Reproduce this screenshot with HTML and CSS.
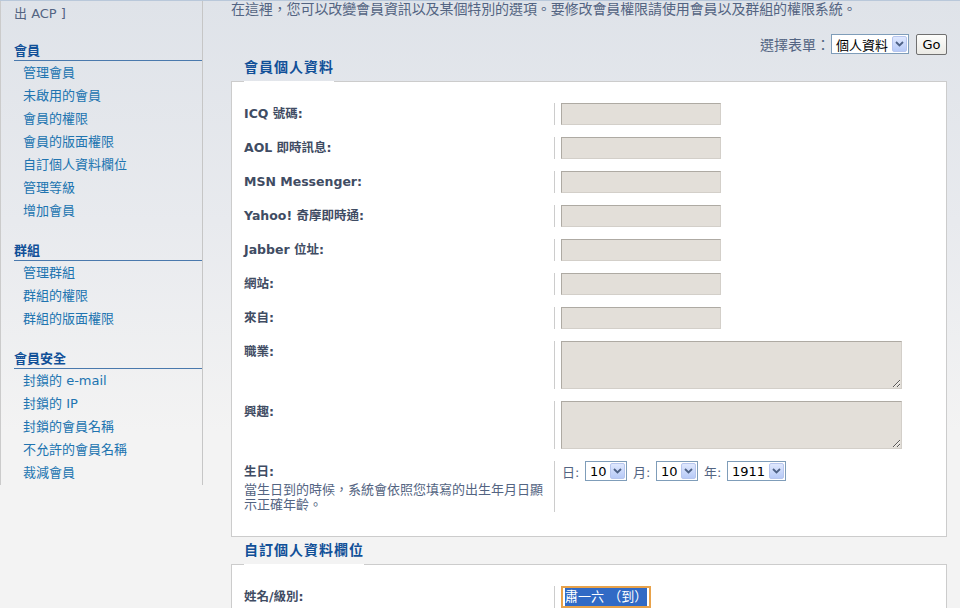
FILE: index.html
```html
<!DOCTYPE html>
<html lang="zh-Hant">
<head>
<meta charset="utf-8">
<title>ACP - 會員個人資料</title>
<link rel="stylesheet" href="styles.css">
</head>
<body>
<div class="page">
  <aside class="menu">
    <div class="toplink">出 ACP ]</div>
    <div class="group">
      <div class="mhead">會員</div>
      <ul class="mlist">
        <li><a href="#">管理會員</a></li>
        <li><a href="#">未啟用的會員</a></li>
        <li><a href="#">會員的權限</a></li>
        <li><a href="#">會員的版面權限</a></li>
        <li><a href="#">自訂個人資料欄位</a></li>
        <li><a href="#">管理等級</a></li>
        <li><a href="#">增加會員</a></li>
      </ul>
    </div>
    <div class="group">
      <div class="mhead">群組</div>
      <ul class="mlist">
        <li><a href="#">管理群組</a></li>
        <li><a href="#">群組的權限</a></li>
        <li><a href="#">群組的版面權限</a></li>
      </ul>
    </div>
    <div class="group">
      <div class="mhead">會員安全</div>
      <ul class="mlist">
        <li><a href="#">封鎖的 e-mail</a></li>
        <li><a href="#">封鎖的 IP</a></li>
        <li><a href="#">封鎖的會員名稱</a></li>
        <li><a href="#">不允許的會員名稱</a></li>
        <li><a href="#">裁減會員</a></li>
      </ul>
    </div>
  </aside>

  <main class="main">
    <p class="intro">在這裡，您可以改變會員資訊以及某個特別的選項。要修改會員權限請使用會員以及群組的權限系統。</p>

    <div class="selrow">
      <span class="sellbl">選擇表單：</span>
      <span class="fsel s-top"><span class="fv">個人資料</span><span class="fbtn"><svg width="9" height="6" viewBox="0 0 9 6"><polyline points="1,1 4.5,4.5 8,1" fill="none" stroke="#4d6185" stroke-width="1.8"/></svg></span></span>
      <button class="go" type="button">Go</button>
    </div>

    <h3 class="legend">會員個人資料</h3>
    <div class="panel">
      <div class="row"><div class="dt"><label>ICQ 號碼:</label></div><div class="dd"><input class="txt" type="text"></div></div>
      <div class="row"><div class="dt"><label>AOL 即時訊息:</label></div><div class="dd"><input class="txt" type="text"></div></div>
      <div class="row"><div class="dt"><label>MSN Messenger:</label></div><div class="dd"><input class="txt" type="text"></div></div>
      <div class="row"><div class="dt"><label>Yahoo! 奇摩即時通:</label></div><div class="dd"><input class="txt" type="text"></div></div>
      <div class="row"><div class="dt"><label>Jabber 位址:</label></div><div class="dd"><input class="txt" type="text"></div></div>
      <div class="row"><div class="dt"><label>網站:</label></div><div class="dd"><input class="txt" type="text"></div></div>
      <div class="row"><div class="dt"><label>來自:</label></div><div class="dd"><input class="txt" type="text"></div></div>
      <div class="row"><div class="dt"><label>職業:</label></div><div class="dd"><textarea class="area"></textarea></div></div>
      <div class="row"><div class="dt"><label>興趣:</label></div><div class="dd"><textarea class="area"></textarea></div></div>
      <div class="row">
        <div class="dt"><label>生日:</label><div class="desc">當生日到的時候，系統會依照您填寫的出生年月日顯示正確年齡。</div></div>
        <div class="dd">
          <div class="bday">
            <span class="bl first">日:</span>
            <span class="fsel s-d"><span class="fv">10</span><span class="fbtn"><svg width="9" height="6" viewBox="0 0 9 6"><polyline points="1,1 4.5,4.5 8,1" fill="none" stroke="#4d6185" stroke-width="1.8"/></svg></span></span>
            <span class="bl">月:</span>
            <span class="fsel s-d"><span class="fv">10</span><span class="fbtn"><svg width="9" height="6" viewBox="0 0 9 6"><polyline points="1,1 4.5,4.5 8,1" fill="none" stroke="#4d6185" stroke-width="1.8"/></svg></span></span>
            <span class="bl">年:</span>
            <span class="fsel s-y"><span class="fv">1911</span><span class="fbtn"><svg width="9" height="6" viewBox="0 0 9 6"><polyline points="1,1 4.5,4.5 8,1" fill="none" stroke="#4d6185" stroke-width="1.8"/></svg></span></span>
          </div>
        </div>
      </div>
    </div>

    <h3 class="legend">自訂個人資料欄位</h3>
    <div class="panel">
      <div class="row">
        <div class="dt"><label>姓名/級別:</label><div class="desc">於本站使用的姓名及級別</div></div>
        <div class="dd"><div class="hsel"><span>肅一六 （到）</span></div></div>
      </div>
    </div>
  </main>
</div>
</body>
</html>
```

FILE: styles.css
```css
html, body {
  margin: 0;
  padding: 0;
  background: #f3f3f3;
}

body {
  border-top: 1px solid #b9c8da;
  font-family: "DejaVu Sans", "Noto Sans CJK TC", sans-serif;
}

.page {
  display: flex;
  align-items: flex-start;
  height: 607px;
  overflow: hidden;
  background: linear-gradient(to bottom, #dfe3e9 0px, #e8eaee 220px, #f3f3f3 430px);
}

/* ---------- side menu ---------- */
.menu {
  flex: none;
  width: 188px;
  height: 480px;
  padding: 4px 0 0 13px;
  border-left: 1px solid #cbcbcb;
  border-right: 1px solid #c6c6c6;
}

.toplink {
  font-size: 13px;
  line-height: 17px;
  color: #536482;
}

.group {
  margin-top: 20px;
}

.mhead {
  font-size: 13px;
  font-weight: bold;
  line-height: 18px;
  color: #115098;
  border-bottom: 1px solid #4a79ad;
}

.mlist {
  list-style: none;
  margin: 0;
  padding: 0 0 0 9px;
}

.mlist li {
  font-size: 13px;
  line-height: 23px;
  white-space: nowrap;
}

.mlist a {
  color: #2074b0;
  text-decoration: none;
}

/* ---------- main ---------- */
.main {
  flex: none;
  width: 716px;
  margin-left: 28px;
}

.intro {
  margin: 0;
  font-size: 14px;
  line-height: 17px;
  letter-spacing: -0.1px;
  color: #536482;
  white-space: nowrap;
}

.selrow {
  margin-top: 16px;
  height: 20px;
  display: flex;
  justify-content: flex-end;
  align-items: center;
}

.sellbl {
  font-size: 14px;
  color: #536482;
  margin-right: 1px;
}

.go {
  margin-left: 7px;
  width: 31px;
  height: 21px;
  padding: 0;
  font-family: "DejaVu Sans", sans-serif;
  font-size: 13px;
  color: #000;
  border: 1px solid #707070;
  border-radius: 2px;
  background: linear-gradient(to bottom, #fdfdfb, #ebeae5);
}

/* faux select */
.fsel {
  display: inline-flex;
  align-items: center;
  justify-content: space-between;
  box-sizing: border-box;
  height: 20px;
  padding: 0 1px 0 4px;
  border: 1px solid #7f9db9;
  background: #fff;
  font-size: 13px;
  color: #000;
  white-space: nowrap;
}

.s-top { width: 78px; }
.s-d { width: 42px; }
.s-y { width: 59px; }

.fbtn {
  flex: none;
  width: 15px;
  height: 16px;
  box-sizing: border-box;
  display: flex;
  align-items: center;
  justify-content: center;
  border: 1px solid #b7c6ee;
  border-radius: 2px;
  background: linear-gradient(to bottom, #dfe8fe, #b7caf7);
}

/* fieldset legend */
.legend {
  position: relative;
  width: fit-content;
  margin: 1px 0 -1px 13px;
  padding: 2px 0 4px;
  font-size: 14px;
  line-height: 20px;
  letter-spacing: 1px;
  font-weight: bold;
  color: #115098;
  border-bottom: 1px solid #fff;
}

.panel {
  background: #fff;
  border: 1px solid #cccccc;
  padding: 21px 12px 24px 12px;
}

.row {
  display: grid;
  grid-template-columns: 310px 1fr;
  margin-bottom: 12px;
}

.row:last-child {
  margin-bottom: 0;
}

.dt {
  padding-right: 9px;
}

.dt label {
  display: block;
  padding-top: 1px;
  font-size: 12.5px;
  line-height: 20px;
  font-weight: bold;
  color: #3f4c63;
  white-space: nowrap;
}

.desc {
  font-size: 13px;
  line-height: 15px;
  color: #536482;
}

.dd {
  border-left: 1px solid #cccccc;
  padding-left: 6px;
}

.txt {
  display: block;
  box-sizing: border-box;
  width: 160px;
  height: 22px;
  margin: 0;
  padding: 0 3px;
  background: #e3dfd9;
  border: 1px solid;
  border-color: #aeaaa3 #d3cfc9 #d3cfc9 #aeaaa3;
  font-size: 13px;
}

.area {
  display: block;
  box-sizing: border-box;
  width: 341px;
  height: 48px;
  margin: 0;
  padding: 2px 3px;
  background: #e3dfd9;
  border: 1px solid;
  border-color: #aeaaa3 #d3cfc9 #d3cfc9 #aeaaa3;
  font-size: 13px;
}

.bday {
  display: flex;
  align-items: center;
  height: 20px;
  font-size: 13px;
  color: #536482;
}

.bl {
  width: 23px;
  margin-left: 6px;
  white-space: nowrap;
}

.bl.first {
  margin-left: 1px;
  width: 23px;
}

.bl:last-of-type {
  width: 24px;
}

.hsel {
  display: flex;
  box-sizing: border-box;
  width: 90px;
  height: 22px;
  padding: 0 2px;
  border: 2px solid #e8a24a;
  background: #fff;
}

.hsel span {
  flex: 1;
  background: #316ac5;
  color: #fff;
  font-size: 13px;
  line-height: 18px;
  white-space: nowrap;
  overflow: hidden;
}
```
